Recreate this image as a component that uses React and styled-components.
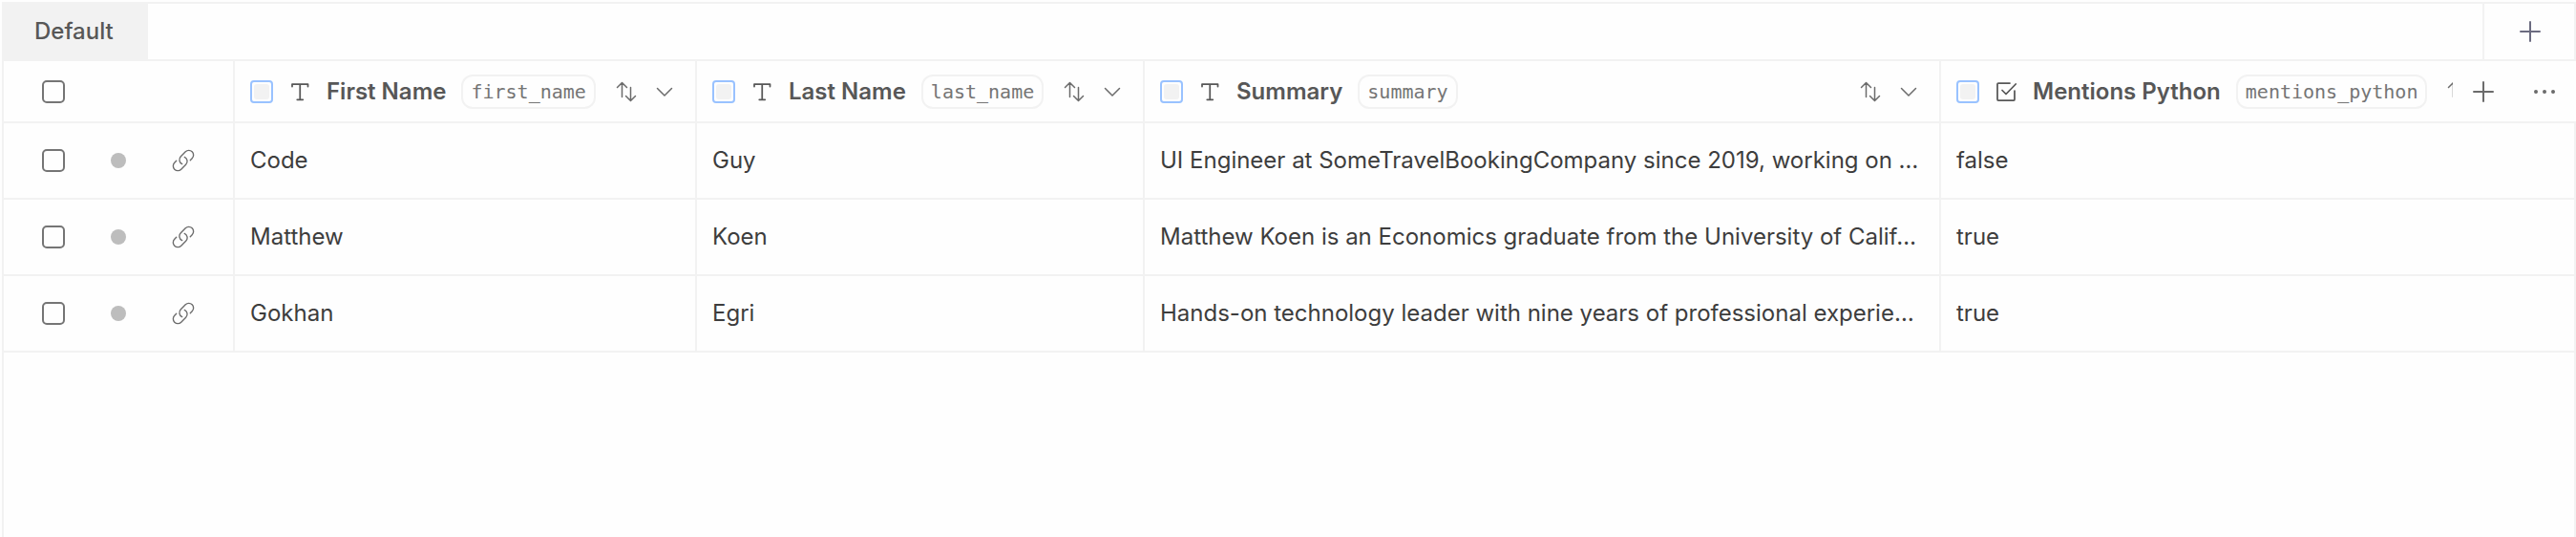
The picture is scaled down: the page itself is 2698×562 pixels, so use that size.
import React from "react";
import styled, { createGlobalStyle } from "styled-components";

const line = "#f2f2f2";

const GlobalStyle = createGlobalStyle`
  *, *::before, *::after { box-sizing: border-box; }
  body {
    margin: 0;
    background: #fefefe;
    color: #3d3d3d;
    font: 400 24px/32px Inter, "Liberation Sans", sans-serif;
  }
`;

const Frame = styled.main`
  margin: 2px 0 0 2px;
  min-height: calc(100vh - 2px);
  border: 2px solid ${line};
  border-bottom: 0;
`;

const TabBar = styled.nav`
  display: flex;
  justify-content: space-between;
  height: 60px;
  border-bottom: 2px solid ${line};
`;

const Tab = styled.button`
  border: 0;
  padding: 0 36px 0 32px;
  background: ${line};
  color: #575757;
  font: inherit;
  font-weight: 500;
`;

const AddViewButton = styled.button`
  display: grid;
  place-items: center;
  width: 96px;
  padding: 0 0 0 2px;
  border: 0;
  border-left: 2px solid ${line};
  background: none;
  color: #6b6b80;
`;

const Grid = styled.table`
  width: 100%;
  table-layout: fixed;
  border-collapse: separate;
  border-spacing: 0;
`;

const Col = styled.col`
  width: ${(p) => p.$width};
`;

const HeadCell = styled.th`
  height: 65px;
  padding: 0;
  border-bottom: 2px solid ${line};
  border-right: ${(p) => (p.$last ? "0" : `2px solid ${line}`)};
  font-weight: 600;
  color: #575757;
  text-align: left;
`;

const Cell = styled.td`
  height: 80px;
  padding: 0 16px;
  border-bottom: 2px solid ${line};
  border-right: ${(p) => (p.$last ? "0" : `2px solid ${line}`)};
  white-space: nowrap;
  overflow: hidden;
`;

const RowTools = styled.div`
  display: flex;
  align-items: center;
  gap: 48px;
  padding-left: ${(p) => (p.$head ? "40px" : "24px")};
`;

const Dot = styled.span`
  width: 16px;
  height: 16px;
  border-radius: 50%;
  background: #bdbdbd;
`;

const CheckBox = styled.input.attrs({ type: "checkbox" })`
  appearance: none;
  flex: none;
  display: block;
  width: 24px;
  height: 24px;
  margin: 0;
  border: 2px solid #757575;
  border-radius: 5px;
`;

const FieldCheckBox = styled(CheckBox)`
  padding: 2px;
  border-color: #99c2ff;
  border-radius: 4px;
  &::before {
    content: "";
    display: block;
    height: 100%;
    border-radius: 3px;
    background: ${line};
  }
`;

const HeadRow = styled.div`
  display: flex;
  align-items: center;
`;

const Field = styled.div`
  flex: 1;
  min-width: 0;
  display: flex;
  align-items: center;
  gap: 16px;
  padding: 0 20px 0 16px;
  overflow: hidden;
  white-space: nowrap;
`;

const FieldLabel = styled.label`
  flex: none;
`;

const Key = styled.code`
  flex: none;
  height: 36px;
  padding: 0 8px;
  border: 2px solid ${line};
  border-radius: 12px;
  color: #757575;
  font: 400 20px/32px "DejaVu Sans Mono", monospace;
`;

const FieldTools = styled.div`
  flex: none;
  display: flex;
  gap: 16px;
  margin-left: auto;
  padding-left: 4px;
`;

const HeadActions = styled.div`
  flex: none;
  display: flex;
  align-items: center;
  gap: 40px;
  height: 63px;
  margin-right: -2px;
  padding: 0 21px 0 20px;
  background: #fefefe;
`;

const IconButton = styled.button`
  flex: none;
  display: block;
  padding: 0;
  border: 0;
  background: none;
  color: #6b6b6b;
`;

const RowLink = styled.a`
  display: block;
  color: #6b6b6b;
`;

const Svg = styled.svg`
  display: block;
  flex: none;
  width: 24px;
  height: 24px;
  fill: none;
  stroke: currentColor;
  stroke-linecap: round;
  stroke-linejoin: round;
`;

const Icon = ({ d, weight = 1.5, box = "0 0 24 24" }) => (
  <Svg viewBox={box} strokeWidth={weight} aria-hidden="true">
    <path d={d} />
  </Svg>
);

const icons = {
  plus: "M12 2v20M2 12h20",
  text: "M4 6.5V4h16.5v2.5M12.25 4v16.25M9.25 20.25h6",
  boolean: "M16 3H4a1 1 0 0 0-1 1v16a1 1 0 0 0 1 1h16a1 1 0 0 0 1-1v-9M8 10.5l4 4L22.2 4",
  sort: "M2.5 7.5l5-5 5 5M7.5 3v14.5M11.5 16.5l5 5 5-5M16.5 7.5v13.5",
  chevron: "M4.5 8.5l7.5 7.5 7.5-7.5",
  link: "M13.19 8.688a4.5 4.5 0 0 1 1.242 7.244l-4.5 4.5a4.5 4.5 0 0 1-6.364-6.364l1.757-1.757m13.35-.622 1.757-1.757a4.5 4.5 0 0 0-6.364-6.364l-4.5 4.5a4.5 4.5 0 0 0 1.242 7.244",
  more: "M3 12h.01M12 12h.01M21 12h.01",
};

const fields = [
  { name: "First Name", key: "first_name", icon: "text" },
  { name: "Last Name", key: "last_name", icon: "text" },
  { name: "Summary", key: "summary", icon: "text" },
  { name: "Mentions Python", key: "mentions_python", icon: "boolean" },
];

const rows = [
  ["Code", "Guy", "UI Engineer at SomeTravelBookingCompany since 2019, working on …", "false"],
  ["Matthew", "Koen", "Matthew Koen is an Economics graduate from the University of Calif…", "true"],
  ["Gokhan", "Egri", "Hands-on technology leader with nine years of professional experie…", "true"],
];

function FieldHeader({ field, last }) {
  return (
    <HeadCell $last={last} scope="col">
      <HeadRow>
        <Field>
          <FieldCheckBox id={field.key} />
          <Icon d={icons[field.icon]} weight={1.75} />
          <FieldLabel htmlFor={field.key}>{field.name}</FieldLabel>
          <Key>{field.key}</Key>
          <FieldTools>
            <IconButton aria-label="Sort"><Icon d={icons.sort} /></IconButton>
            <IconButton aria-label="Field menu"><Icon d={icons.chevron} /></IconButton>
          </FieldTools>
        </Field>
        {last && (
          <HeadActions>
            <IconButton aria-label="Add field"><Icon d={icons.plus} weight={2} /></IconButton>
            <IconButton aria-label="More"><Icon d={icons.more} weight={4} /></IconButton>
          </HeadActions>
        )}
      </HeadRow>
    </HeadCell>
  );
}

export default function App() {
  return (
    <>
      <GlobalStyle />
      <Frame>
        <TabBar>
          <Tab>Default</Tab>
          <AddViewButton aria-label="Add view"><Icon d={icons.plus} weight={2} /></AddViewButton>
        </TabBar>
        <Grid>
          <colgroup>
            <Col $width="242px" />
            <Col $width="484px" />
            <Col $width="469px" />
            <Col $width="834px" />
            <Col $width="auto" />
          </colgroup>
          <thead>
            <tr>
              <HeadCell scope="col">
                <RowTools $head><CheckBox aria-label="Select all rows" /></RowTools>
              </HeadCell>
              {fields.map((f, i) => (
                <FieldHeader key={f.key} field={f} last={i === fields.length - 1} />
              ))}
            </tr>
          </thead>
          <tbody>
            {rows.map((row) => (
              <tr key={row[0]}>
                <Cell>
                  <RowTools>
                    <CheckBox aria-label={`Select ${row[0]}`} />
                    <Dot />
                    <RowLink href="#" aria-label={`Open ${row[0]}`}>
                      <Icon d={icons.link} box="1 1 22 22" weight={1.25} />
                    </RowLink>
                  </RowTools>
                </Cell>
                {row.map((value, i) => (
                  <Cell key={fields[i].key} $last={i === row.length - 1}>{value}</Cell>
                ))}
              </tr>
            ))}
          </tbody>
        </Grid>
      </Frame>
    </>
  );
}
